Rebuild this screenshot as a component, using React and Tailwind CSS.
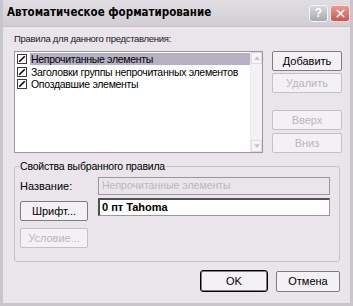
import { X } from 'lucide-react';

const font = { fontFamily: '"Liberation Sans", Arial, sans-serif' };

function Btn({ children, disabled = false, strong = false, className = '' }) {
  return (
    <div
      className={`flex items-center justify-center h-[20px] border border-[#7f7d82] rounded-[2px] bg-[#f3f1f4] text-[11px] ${
        disabled ? 'text-[#b9b6bc] border-[#c3c0c6]' : 'text-black'
      } ${strong ? 'outline outline-1 outline-black' : ''} ${className}`}
    >
      {children}
    </div>
  );
}

function Check() {
  return (
    <div className="w-[10px] h-[10px] border border-[#3c3c3c] bg-white flex items-center justify-center shrink-0">
      <svg viewBox="0 0 10 10" className="w-[8px] h-[8px]">
        <path d="M1.5 8.5 L8.5 1.5" stroke="black" strokeWidth="2" />
      </svg>
    </div>
  );
}

export default function App() {
  const rules = [
    'Непрочитанные элементы',
    'Заголовки группы непрочитанных элементов',
    'Опоздавшие элементы',
  ];

  return (
    <div style={font} className="w-[353px] h-[306px] bg-[#e9e5ea] border-l-[3px] border-r-[3px] border-b-[3px] border-[#c9c5cb] flex flex-col overflow-hidden">
      {/* Title bar */}
      <div className="h-[27px] shrink-0 flex items-center justify-between pl-[4px] bg-gradient-to-b from-[#e1dee3] to-[#d0cdd4] border-b border-[#c8c4ca]">
        <span className="text-[11.5px] font-bold text-black" style={{ fontFamily: '"DejaVu Sans Condensed", "DejaVu Sans", sans-serif' }}>
          Автоматическое форматирование
        </span>
        <div className="flex items-center gap-[2px]">
          <div className="w-[19px] h-[17px] rounded-[3px] bg-gradient-to-b from-[#d8d8de] to-[#a9a9b4] border border-[#f4f4f6] flex items-center justify-center text-white text-[12px] font-bold">
            ?
          </div>
          <div className="w-[20px] h-[17px] rounded-[3px] bg-gradient-to-b from-[#e99a94] to-[#c9564f] border border-[#f4e6e6] flex items-center justify-center">
            <X className="w-[13px] h-[13px] text-white" strokeWidth={3} />
          </div>
        </div>
      </div>

      <div className="flex-1 flex flex-col pl-[11px] pr-[7px]">
        <div className="mt-[5px] h-[13px] text-[9.5px] leading-[13px] tracking-[-0.3px] text-[#202020]">
          Правила для данного представления:
        </div>

        <div className="mt-[6px] flex gap-[9px]">
          {/* List box */}
          <div className="w-[249px] h-[102px] bg-white border border-[#9a989c] flex">
            <div className="flex-1 flex flex-col pt-[1px] pl-[2px] overflow-hidden">
              {rules.map((r, i) => (
                <div key={r} className="h-[12.5px] flex items-center gap-[3px] text-[10.5px] tracking-[-0.3px] whitespace-nowrap">
                  <Check />
                  <span className={`px-[1px] leading-[12px] ${i === 0 ? 'bg-[#b5b0c2] flex-1' : ''}`}>{r}</span>
                </div>
              ))}
            </div>
            <div className="w-[12px] bg-[#f3f1f4] flex flex-col justify-between border-l border-[#ebe9ec]">
              <div className="h-[12px] border border-[#dedbe0] bg-[#f6f4f7] flex items-center justify-center">
                <svg viewBox="0 0 8 5" className="w-[6px] h-[4px]"><path d="M0 5 L4 0 L8 5Z" fill="#c8c5cb" /></svg>
              </div>
              <div className="h-[12px] border border-[#dedbe0] bg-[#f6f4f7] flex items-center justify-center">
                <svg viewBox="0 0 8 5" className="w-[6px] h-[4px]"><path d="M0 0 L4 5 L8 0Z" fill="#c8c5cb" /></svg>
              </div>
            </div>
          </div>

          {/* Buttons */}
          <div className="w-[70px] flex flex-col">
            <Btn>Добавить</Btn>
            <Btn disabled className="mt-[2px]">Удалить</Btn>
            <Btn disabled className="mt-[17px]">Вверх</Btn>
            <Btn disabled className="mt-[3px]">Вниз</Btn>
          </div>
        </div>

        {/* Group box */}
        <div className="relative mt-[13px] w-[326px] h-[96px] border border-[#c6c2c8] rounded-[3px] px-[5px] pt-[10px]">
          <span className="absolute -top-[8px] left-[4px] bg-[#e9e5ea] px-[1px] text-[10.5px] tracking-[-0.2px] leading-[14px]">
            Свойства выбранного правила
          </span>
          <div className="flex items-center">
            <span className="w-[78px] text-[11px]">Название:</span>
            <div className="w-[232px] h-[18px] border border-[#9a989c] bg-[#e9e5ea] text-[10.5px] text-[#b9b6bc] flex items-center pl-[3px]">
              Непрочитанные элементы
            </div>
          </div>
          <div className="flex items-start mt-[6px]">
            <Btn className="w-[68px]">Шрифт...</Btn>
            <div className="ml-[10px] w-[232px] h-[18px] border border-[#9a989c] border-l-2 border-t-2 border-l-[#505050] border-t-[#505050] bg-white text-[11px] font-bold flex items-center pl-[2px] -mt-[3px]">
              0 пт Tahoma
            </div>
          </div>
          <Btn disabled className="w-[68px] mt-[7px]">Условие...</Btn>
        </div>

        {/* Footer */}
        <div className="mt-[9px] flex justify-end gap-[9px] pr-[3px]">
          <Btn strong className="w-[66px] h-[20px]">OK</Btn>
          <Btn className="w-[64px] h-[21px]">Отмена</Btn>
        </div>
      </div>
    </div>
  );
}
